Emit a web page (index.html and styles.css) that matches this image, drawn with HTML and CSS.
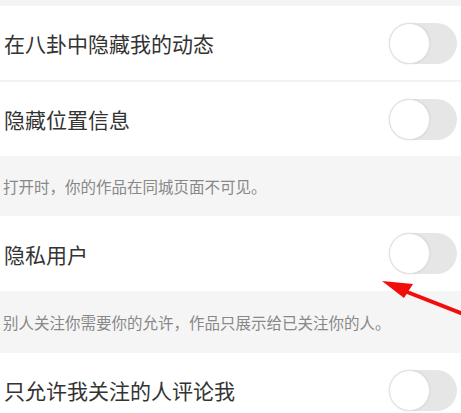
FILE: index.html
```html
<!DOCTYPE html>
<html lang="zh">
<head>
<meta charset="utf-8">
<link rel="stylesheet" href="styles.css">
</head>
<body>
<div class="page">
  <div class="top-band"></div>
  <div class="row">
    <span class="title">在八卦中隐藏我的动态</span>
    <span class="toggle"><span class="knob"></span></span>
  </div>
  <div class="divider"></div>
  <div class="row">
    <span class="title">隐藏位置信息</span>
    <span class="toggle"><span class="knob"></span></span>
  </div>
  <div class="note">打开时，你的作品在同城页面不可见。</div>
  <div class="row row-tall">
    <span class="title">隐私用户</span>
    <span class="toggle"><span class="knob"></span></span>
  </div>
  <div class="note note-tall">别人关注你需要你的允许，作品只展示给已关注你的人。</div>
  <div class="row">
    <span class="title">只允许我关注的人评论我</span>
    <span class="toggle"><span class="knob"></span></span>
  </div>
  <svg class="arrow" width="461" height="413" viewBox="0 0 461 413">
    <line x1="402" y1="290" x2="466" y2="315" stroke="#f20d0d" stroke-width="4" stroke-linecap="round"/>
    <polygon points="382,281 413,284 404,298" fill="#f20d0d"/>
  </svg>
</div>
</body>
</html>
```
FILE: styles.css
```css
html, body {
  margin: 0;
  padding: 0;
  background: #ffffff;
}
.page {
  position: relative;
  width: 461px;
  height: 413px;
  overflow: hidden;
  font-family: "Noto Sans CJK SC", "Noto Sans", sans-serif;
}
.top-band {
  height: 6px;
  background: #f4f4f4;
}
.row {
  height: 74px;
  display: flex;
  align-items: center;
  justify-content: space-between;
  padding: 0 4px 0 4px;
}
.row-tall {
  height: 75px;
}
.title {
  font-size: 21px;
  color: #333333;
  letter-spacing: 0;
}
.divider {
  height: 2px;
  background: #f2f2f2;
}
.note {
  height: 60px;
  display: flex;
  align-items: center;
  padding-left: 3px;
  background: #f5f5f5;
  font-size: 15.5px;
  color: #888888;
}
.note-tall {
  height: 62px;
}
.toggle {
  width: 68px;
  height: 41px;
  border-radius: 21px;
  background: #e6e6e6;
  display: flex;
  align-items: center;
  box-sizing: border-box;
}
.knob {
  width: 41px;
  height: 41px;
  border-radius: 50%;
  background: #ffffff;
  box-sizing: border-box;
  border: 1px solid #e2e2e2;
  box-shadow: 0 0 2px rgba(0, 0, 0, 0.12);
}
.arrow {
  position: absolute;
  left: 0;
  top: 0;
  pointer-events: none;
}
```
